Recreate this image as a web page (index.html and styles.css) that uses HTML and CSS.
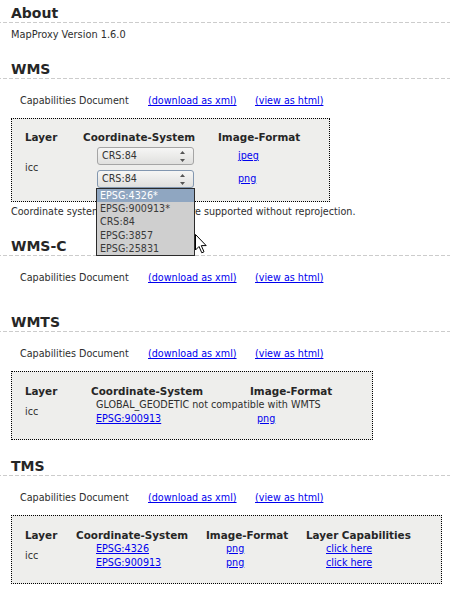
FILE: index.html
```html
<!DOCTYPE html>
<html>
<head>
<meta charset="utf-8">
<title>MapProxy Demo</title>
<link rel="stylesheet" href="styles.css">
</head>
<body>
<div class="page">
  <h2 class="title t-about">About</h2>
  <p class="version">MapProxy Version 1.6.0</p>

  <h2 class="title t-wms">WMS</h2>
  <div class="caps">
    <span>Capabilities Document</span>
    <a href="#">(download as xml)</a>
    <a href="#">(view as html)</a>
  </div>
  <div class="box box-wms">
    <div class="th">Layer</div>
    <div class="th">Coordinate-System</div>
    <div class="th">Image-Format</div>
    <div class="layer">icc</div>
    <div class="srs-list">
      <div class="select">
        <span>CRS:84</span>
        <svg class="arrows" width="5" height="11" viewBox="0 0 5 11"><path d="M0 3 L2.5 0 L5 3 Z M0 8 L2.5 11 L5 8 Z" fill="#555"/></svg>
      </div>
      <div class="select-wrap">
        <div class="select focused">
          <span>CRS:84</span>
          <svg class="arrows" width="5" height="11" viewBox="0 0 5 11"><path d="M0 3 L2.5 0 L5 3 Z M0 8 L2.5 11 L5 8 Z" fill="#555"/></svg>
        </div>
        <div class="dropdown">
          <div class="opt active">EPSG:4326*</div>
          <div class="opt">EPSG:900913*</div>
          <div class="opt">CRS:84</div>
          <div class="opt">EPSG:3857</div>
          <div class="opt">EPSG:25831</div>
          <svg class="cursor" width="13" height="20" viewBox="0 0 13 20"><path d="M0.5 0.5 L0.5 16 L4 12.5 L6.8 18.8 L9 17.8 L6.3 11.6 L11.2 11.6 Z" fill="#fff" stroke="#000" stroke-width="1" stroke-linejoin="miter"/></svg>
        </div>
      </div>
    </div>
    <div class="fmt-list">
      <a href="#">jpeg</a>
      <a href="#">png</a>
    </div>
  </div>
  <p class="note">Coordinate systems marked with '*' are supported without reprojection.</p>

  <h2 class="title t-wmsc">WMS-C</h2>
  <div class="caps">
    <span>Capabilities Document</span>
    <a href="#">(download as xml)</a>
    <a href="#">(view as html)</a>
  </div>

  <h2 class="title t-wmts">WMTS</h2>
  <div class="caps">
    <span>Capabilities Document</span>
    <a href="#">(download as xml)</a>
    <a href="#">(view as html)</a>
  </div>
  <div class="box box-wmts">
    <div class="th">Layer</div>
    <div class="th">Coordinate-System</div>
    <div class="th">Image-Format</div>
    <div class="layer span2">icc</div>
    <div class="warn">GLOBAL_GEODETIC not compatible with WMTS</div>
    <div class="c-srs"><a href="#">EPSG:900913</a></div>
    <div class="c-fmt"><a href="#">png</a></div>
  </div>

  <h2 class="title t-tms">TMS</h2>
  <div class="caps">
    <span>Capabilities Document</span>
    <a href="#">(download as xml)</a>
    <a href="#">(view as html)</a>
  </div>
  <div class="box box-tms">
    <div class="th">Layer</div>
    <div class="th">Coordinate-System</div>
    <div class="th">Image-Format</div>
    <div class="th">Layer Capabilities</div>
    <div class="layer span2">icc</div>
    <div class="ind"><a href="#">EPSG:4326</a></div>
    <div class="ind"><a href="#">png</a></div>
    <div class="ind"><a href="#">click here</a></div>
    <div class="ind"><a href="#">EPSG:900913</a></div>
    <div class="ind"><a href="#">png</a></div>
    <div class="ind"><a href="#">click here</a></div>
  </div>
</div>
</body>
</html>
```
FILE: styles.css
```css
* { box-sizing: border-box; }

html, body {
  margin: 0;
  padding: 0;
  background: #fff;
}

body {
  color: #2e2e2e;
  font-family: "DejaVu Sans", Verdana, sans-serif;
  font-size: 9.6px;
}

a { color: #0000ee; text-decoration: underline; }

.page { width: 450px; }

.title {
  margin: 0;
  height: 18px;
  padding: 0 0 1px 11px;
  font-size: 14px;
  line-height: 17px;
  font-weight: bold;
  color: #262626;
  background-image: repeating-linear-gradient(90deg, #cccccc 0 1px, transparent 1px 3px, #cccccc 3px 6px);
  background-size: 100% 1px;
  background-position: left bottom;
  background-repeat: no-repeat;
}

.t-about { margin-top: 5px; }
.t-wms { margin-top: 20px; }
.t-wmsc { margin-top: 20px; }
.t-wmts { margin-top: 30px; }
.t-tms { margin-top: 18px; }

.version {
  margin: 6px 0 0;
  padding-left: 11px;
  font-size: 9.8px;
  line-height: 12px;
}

.caps {
  margin-top: 16px;
  padding-left: 20px;
  display: grid;
  grid-template-columns: 128px 107px auto;
  line-height: 12px;
  height: 12px;
}

.box {
  margin: 11px 0 0 11px;
  border: 1px dotted #000;
  background: #eeeeec;
  display: grid;
  align-items: center;
}

.th {
  font-weight: bold;
  font-size: 10.4px;
  color: #262626;
}

.box-wms {
  width: 319px;
  height: 84px;
  padding: 12px 0 0 13px;
  grid-template-columns: 58px 135px auto;
  grid-template-rows: 12px 41px;
  row-gap: 4px;
  align-content: start;
}
.box-wms .th { line-height: 12px; }

.srs-list {
  display: flex;
  flex-direction: column;
  gap: 5px;
  padding-left: 14px;
}

.select-wrap { position: relative; }

.select {
  width: 97px;
  height: 18px;
  border: 1px solid #a5a5a5;
  border-radius: 3px;
  background: linear-gradient(#f6f6f5, #e0e0de);
  display: flex;
  align-items: center;
  justify-content: space-between;
  padding: 0 8px 0 4px;
  line-height: 16px;
  color: #333;
}
.select.focused { border-color: #8297b0; }

.arrows { display: block; }

.dropdown {
  position: absolute;
  left: -1px;
  top: 18px;
  width: 99px;
  border: 1px solid #2b2b2b;
  background: #cfcfcf;
  z-index: 5;
}
.opt {
  height: 13.2px;
  line-height: 13.2px;
  padding-left: 3px;
  color: #3a3a3a;
}
.opt.active { background: #8fa6c1; color: #fff; }

.cursor {
  position: absolute;
  left: 98px;
  top: 45px;
}

.fmt-list {
  display: flex;
  flex-direction: column;
  gap: 5px;
  padding-left: 20px;
}
.fmt-list a { line-height: 18px; height: 18px; }

.note {
  margin: 4px 0 0;
  padding-left: 11px;
  line-height: 12px;
  height: 12px;
}

.box-wmts {
  width: 362px;
  height: 69px;
  padding: 12px 0 0 13px;
  grid-template-columns: 66px 159px auto;
  grid-auto-rows: 14px;
  align-content: start;
  line-height: 14px;
}
.layer.span2 { grid-row: span 2; }
.warn { grid-column: span 2; padding-left: 5px; }
.c-srs { padding-left: 5px; }
.c-fmt { padding-left: 7px; }

.box-tms {
  width: 431px;
  height: 69px;
  padding: 12px 0 0 13px;
  grid-template-columns: 51px 130px 100px auto;
  grid-auto-rows: 14px;
  align-content: start;
  line-height: 14px;
}
.ind { padding-left: 20px; }
```
